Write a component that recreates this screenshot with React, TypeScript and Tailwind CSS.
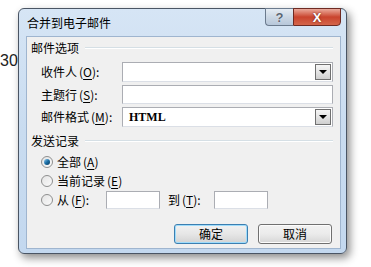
import React from 'react';

const cjk = "font-['Noto_Sans_CJK_SC','Noto_Sans',sans-serif]";

function Acc({ k }: { k: string }) {
  return (
    <span className="ml-[2px] text-[12px]">
      (<span className="underline underline-offset-[2px]">{k}</span>)
    </span>
  );
}

function DropButton() {
  return (
    <div className="flex h-full w-[16px] items-center justify-center border border-[#707070] bg-gradient-to-b from-[#f6f6f6] via-[#e4e4e4] to-[#cfcfcf]">
      <div className="h-0 w-0 border-x-[4px] border-t-[4px] border-x-transparent border-t-black" />
    </div>
  );
}

function Field({ combo, value }: { combo?: boolean; value?: string }) {
  return (
    <div className="flex h-full w-[211px] shrink-0 items-stretch border border-[#abadb3] border-b-[#dbdfe6] bg-white p-[1px]">
      <div className="flex flex-1 items-center pl-[5px] font-['Liberation_Serif',serif] text-[12px] font-bold text-black">
        {value}
      </div>
      {combo && <DropButton />}
    </div>
  );
}

function Section({ title }: { title: string }) {
  return (
    <div className="flex h-[14px] items-center pl-[4px] pr-[7px]">
      <span className="text-[12px] leading-[14px] text-black">{title}</span>
      <div className="ml-[6px] flex-1 border-t border-[#d5dfe5] border-b border-b-white" />
    </div>
  );
}

function Radio({ checked }: { checked?: boolean }) {
  return (
    <div className="flex h-[12px] w-[12px] shrink-0 items-center justify-center rounded-full border border-[#8e8f8f] bg-gradient-to-br from-[#e4e4e4] to-[#fafafa]">
      {checked && (
        <div className="h-[6px] w-[6px] rounded-full bg-gradient-to-br from-[#8fd0f2] via-[#1a6fa6] to-[#0b3a5e]" />
      )}
    </div>
  );
}

function SmallBox() {
  return <div className="h-[18px] w-[54px] shrink-0 border border-[#abadb3] border-b-[#dbdfe6] bg-white" />;
}

export default function App() {
  return (
    <div className={`relative h-[267px] w-[371px] overflow-hidden bg-white ${cjk}`}>
      <span className="absolute left-0 top-[51px] font-['Liberation_Sans',sans-serif] text-[16px] leading-[20px] text-[#222]">
        30
      </span>

      <div className="absolute left-[18px] top-[8px] flex h-[246px] w-[329px] flex-col rounded-[6px] border border-[#4a5564] bg-gradient-to-b from-[#d6e5f5] via-[#c9dcf0] to-[#c3d8ef] pb-[4px] pl-[7px] pr-[5px] shadow-[3px_4px_9px_rgba(0,0,0,0.45)]">
        {/* title bar */}
        <div className="flex h-[27px] shrink-0 items-start pl-[1px]">
          <span className="self-center text-[12px] leading-[14px] text-black">合并到电子邮件</span>
          <div className="ml-auto -mt-[1px] flex">
            <div className="flex h-[18px] w-[28px] items-center justify-center rounded-bl-[4px] border border-r-0 border-[#6b7a8d] bg-gradient-to-b from-[#e4ebf3] via-[#cbd7e4] to-[#b7c7da] font-['Liberation_Sans',sans-serif] text-[13px] font-bold leading-none text-[#5a6573] [text-shadow:0_0_1px_#fff]">
              ?
            </div>
            <div className="flex h-[18px] w-[48px] items-center justify-center rounded-br-[4px] border border-[#6e2a22] bg-gradient-to-b from-[#e9a99b] via-[#c9432d] to-[#d4654a] font-['Liberation_Sans',sans-serif] text-[13px] font-bold leading-none text-white [text-shadow:0_0_2px_#5a1a10]">
              X
            </div>
          </div>
        </div>

        {/* client area */}
        <div className="flex h-[213px] shrink-0 flex-col border border-[#9fb5cf] bg-[#f0f0f0] pt-[4px] text-[12px] leading-[14px] text-black">
          <Section title="邮件选项" />

          <div className="mt-[7px] flex h-[20px] items-center pl-[14px]">
            <span className="w-[81px] shrink-0">收件人<Acc k="O" />:</span>
            <Field combo />
          </div>
          <div className="mt-[3px] flex h-[19px] items-center pl-[14px]">
            <span className="w-[81px] shrink-0">主题行<Acc k="S" />:</span>
            <Field />
          </div>
          <div className="mt-[3px] flex h-[20px] items-center pl-[14px]">
            <span className="w-[81px] shrink-0">邮件格式<Acc k="M" />:</span>
            <Field combo value="HTML" />
          </div>

          <div className="mt-[7px]">
            <Section title="发送记录" />
          </div>

          <div className="mt-[4px] flex h-[19px] items-center gap-[4px] pl-[14px]">
            <Radio checked />
            <span>全部<Acc k="A" /></span>
          </div>
          <div className="flex h-[19px] items-center gap-[4px] pl-[14px]">
            <Radio />
            <span>当前记录<Acc k="E" /></span>
          </div>
          <div className="flex h-[19px] items-center pl-[14px]">
            <Radio />
            <span className="ml-[4px] w-[49px] shrink-0">从<Acc k="F" />:</span>
            <SmallBox />
            <span className="ml-[8px] w-[46px] shrink-0">到<Acc k="T" />:</span>
            <SmallBox />
          </div>

          <div className="mt-[15px] flex justify-end gap-[10px] pr-[8px]">
            <button className="flex h-[20px] w-[74px] items-center justify-center rounded-[3px] border border-[#3c7fb1] bg-gradient-to-b from-[#f2f2f2] via-[#e6e6e6] to-[#d3d3d3] shadow-[inset_0_0_0_1px_#9fdcfb] text-[12px]">
              确定
            </button>
            <button className="flex h-[20px] w-[74px] items-center justify-center rounded-[3px] border border-[#707070] bg-gradient-to-b from-[#f2f2f2] via-[#ebebeb] to-[#d6d6d6] shadow-[inset_0_0_0_1px_#fcfcfc] text-[12px]">
              取消
            </button>
          </div>
        </div>
      </div>
    </div>
  );
}
